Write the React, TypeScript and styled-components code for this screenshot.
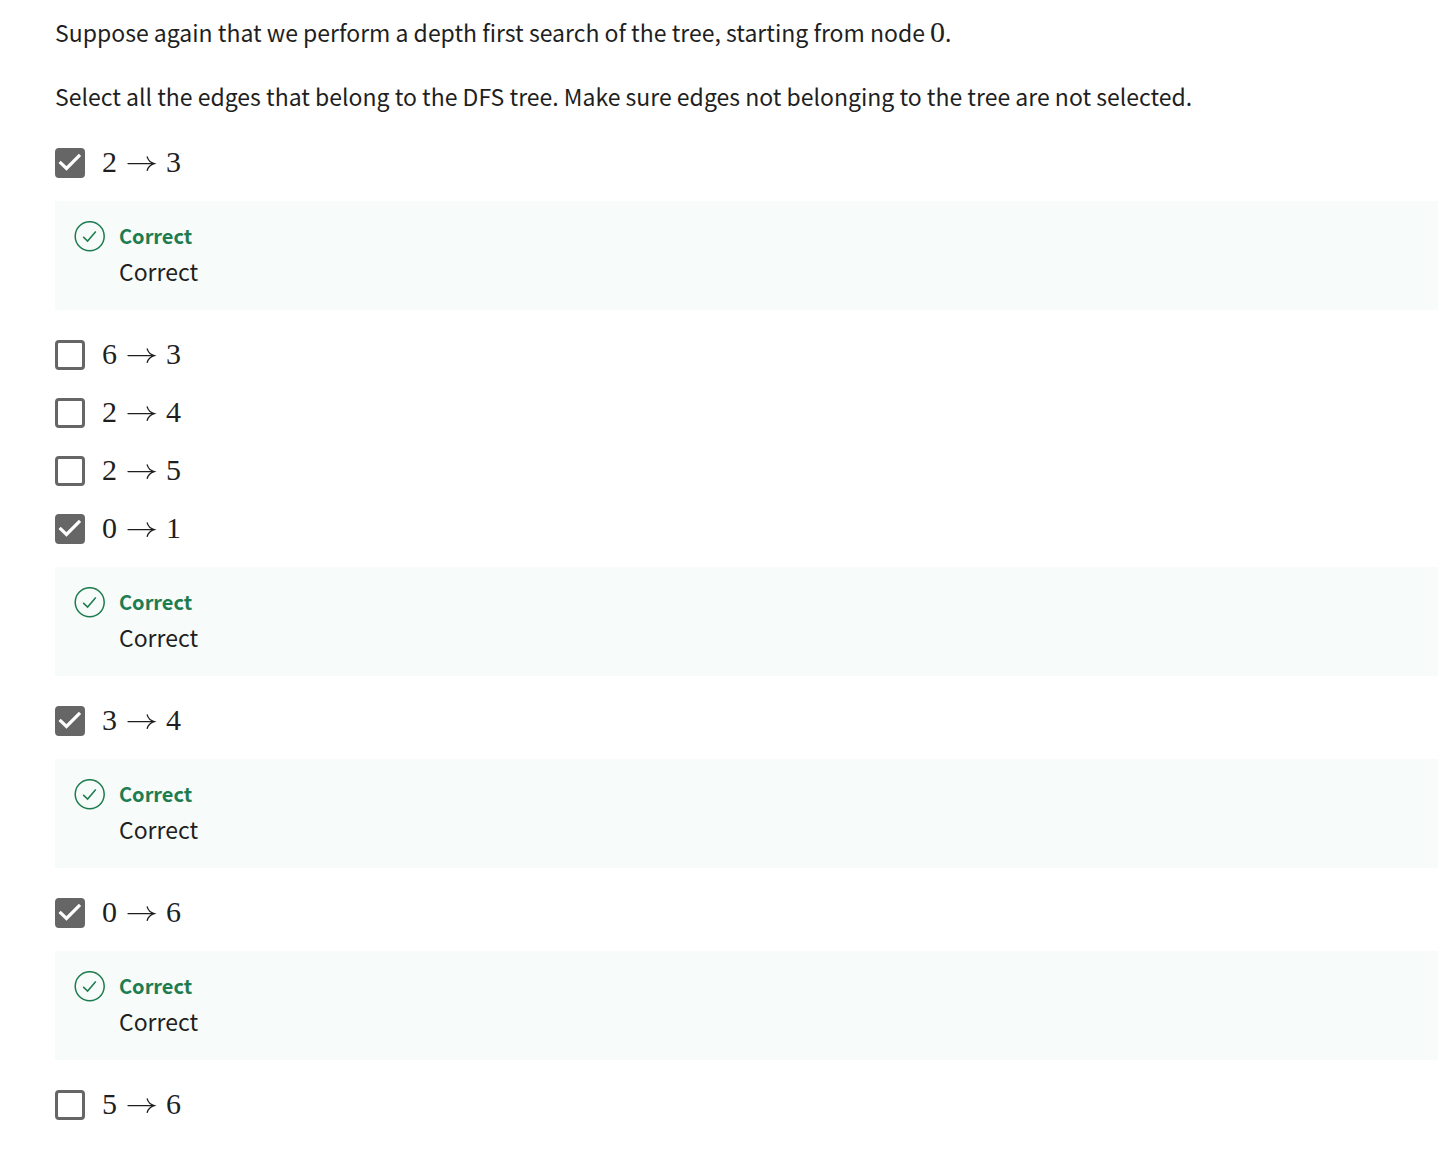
import React, { useId, useState } from "react";
import styled, { createGlobalStyle } from "styled-components";

const GlobalStyle = createGlobalStyle`
  *, *::before, *::after { box-sizing: border-box; }
  body {
    margin: 0;
    background: #fff;
    color: #1f1f1f;
    font-family: "Noto Sans CJK SC", "Noto Sans", sans-serif;
    font-size: 23px;
    line-height: 36px;
  }
`;

const Question = styled.main`
  padding: 14px 0 14px 55px;
`;

const Prompt = styled.p`
  margin: 0 0 28px;
  &:last-of-type { margin-bottom: 20px; }
`;

const Options = styled.fieldset`
  margin: 0;
  padding: 0;
  border: 0;
  min-width: 0;
`;

const Option = styled.div`
  display: flex;
  align-items: center;
  gap: 17px;
  height: 58px;
`;

const BoxWrap = styled.span`
  display: grid;
  width: 30px;
  height: 30px;
  > * { grid-area: 1 / 1; }
`;

const Box = styled.input`
  appearance: none;
  width: 30px;
  height: 30px;
  margin: 0;
  border: 3px solid #666;
  border-radius: 4px;
  background: #fff;
  &:checked { background: #666; }
`;

const Tick = styled.svg`
  width: 30px;
  height: 30px;
  pointer-events: none;
  fill: none;
  stroke: #fff;
  stroke-width: 3.2;
`;

const Digit = styled.span`
  padding-bottom: 2px;
  font-family: "Liberation Serif", serif;
  font-size: 30px;
  line-height: 30px;
`;

const Formula = styled.label`
  display: flex;
  align-items: center;
  gap: 9px;
`;

const Arrow = styled.svg`
  width: 31px;
  height: 20px;
  fill: none;
  stroke: #1f1f1f;
  stroke-width: 1.3;
  stroke-linecap: round;
`;

const Feedback = styled.section`
  display: flex;
  align-items: flex-start;
  gap: 14px;
  margin: 9px 0 16px;
  padding: 18px 19px 21px;
  background: #f7fbf9;
`;

const CorrectIcon = styled.svg`
  flex: none;
  width: 31px;
  height: 31px;
  margin-top: 2px;
  fill: none;
  stroke: #1d7c50;
  stroke-width: 1.5;
`;

const Verdict = styled.strong`
  display: block;
  color: #1d7c50;
  font-size: 20px;
  font-weight: 700;
  line-height: 34px;
`;

const Explanation = styled.p`
  margin: 0;
`;

interface Edge {
  from: number;
  to: number;
  selected?: boolean;
}

const edges: Edge[] = [
  { from: 2, to: 3, selected: true },
  { from: 6, to: 3 },
  { from: 2, to: 4 },
  { from: 2, to: 5 },
  { from: 0, to: 1, selected: true },
  { from: 3, to: 4, selected: true },
  { from: 0, to: 6, selected: true },
  { from: 5, to: 6 },
];

function EdgeOption({ from, to, selected = false }: Edge) {
  const id = useId();
  const [checked, setChecked] = useState(selected);
  return (
    <>
      <Option>
        <BoxWrap>
          <Box
            id={id}
            type="checkbox"
            checked={checked}
            onChange={(e) => setChecked(e.target.checked)}
          />
          {checked && (
            <Tick viewBox="0 0 30 30" aria-hidden="true">
              <path d="M4.6 13.8 11.5 20.4 25 6.9" />
            </Tick>
          )}
        </BoxWrap>
        <Formula htmlFor={id}>
          <Digit>{from}</Digit>
          <Arrow viewBox="0 0 31 20" role="img" aria-label="to">
            <path d="M2 10.6H28M21.2 3.8C22 7 24.6 9.5 28.3 10.6C24.6 11.7 22 14.2 21.2 17.4" />
          </Arrow>
          <Digit>{to}</Digit>
        </Formula>
      </Option>
      {selected && (
        <Feedback>
          <CorrectIcon viewBox="0 0 31 31" aria-hidden="true">
            <circle cx="15.7" cy="15.2" r="14.5" />
            <path d="M9.2 15.9 13.6 20.1 21.8 10.5" />
          </CorrectIcon>
          <div>
            <Verdict>Correct</Verdict>
            <Explanation>Correct</Explanation>
          </div>
        </Feedback>
      )}
    </>
  );
}

export default function App() {
  return (
    <>
      <GlobalStyle />
      <Question>
        <Prompt>
          Suppose again that we perform a depth first search of the tree, starting from node{" "}
          <Digit>0</Digit>.
        </Prompt>
        <Prompt>
          Select all the edges that belong to the DFS tree. Make sure edges not belonging to the
          tree are not selected.
        </Prompt>
        <Options aria-label="Edges of the DFS tree">
          {edges.map((edge) => (
            <EdgeOption key={`${edge.from}-${edge.to}`} {...edge} />
          ))}
        </Options>
      </Question>
    </>
  );
}
